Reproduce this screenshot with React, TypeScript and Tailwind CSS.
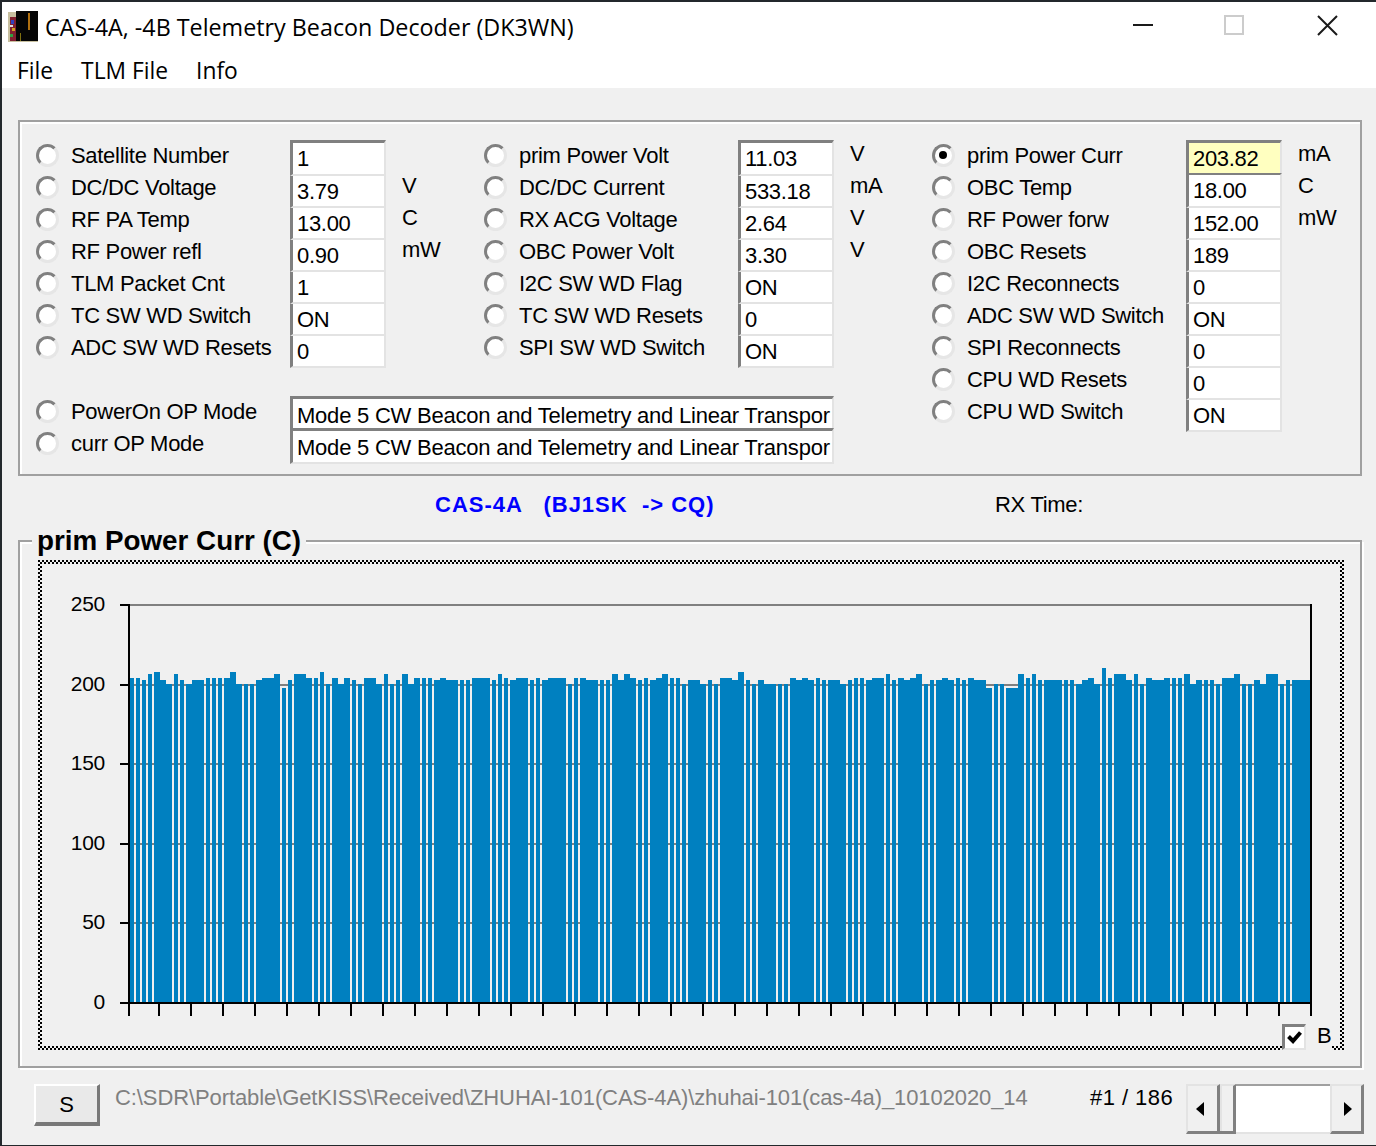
import React from 'react'

// bar runs taken off the plot: [from x, to x, top y]
const bars: [number, number, number][] = [
  [130,134,678],[136,140,678],[142,146,680],[148,152,674],[154,160,672],[160,166,680],[166,172,684],[174,178,674],[180,184,680],[186,192,684],
  [192,204,680],[206,210,678],[212,216,678],[218,222,678],[224,230,678],[230,236,672],[236,242,684],[244,248,684],[250,254,684],[256,262,680],
  [262,274,678],[274,280,674],[282,286,688],[288,292,680],[294,306,674],[306,312,678],[314,318,678],[320,324,672],[326,330,684],[332,338,678],
  [338,344,684],[344,350,678],[352,356,680],[358,362,684],[364,376,678],[376,382,684],[384,388,674],[390,394,684],[396,400,680],[402,408,674],
  [408,414,684],[414,420,678],[422,426,678],[428,432,678],[434,440,680],[440,446,678],[446,458,680],[460,464,680],[466,470,680],[472,490,678],
  [492,496,680],[498,502,674],[504,508,678],[510,516,680],[516,528,678],[530,534,680],[536,540,678],[542,548,680],[548,566,678],[568,572,684],
  [574,578,678],[580,586,678],[586,598,680],[600,604,680],[606,610,680],[612,618,674],[618,624,680],[624,630,674],[630,636,678],[638,642,680],
  [644,648,678],[650,656,680],[656,662,678],[662,668,674],[670,674,678],[676,680,678],[682,686,684],[688,700,680],[700,706,684],[708,712,680],
  [714,718,684],[720,732,678],[732,738,680],[738,744,672],[746,750,680],[752,756,684],[758,764,680],[764,776,684],[778,782,684],[784,788,684],
  [790,796,678],[796,802,680],[802,808,678],[808,814,680],[816,820,678],[822,826,680],[828,840,680],[840,846,684],[848,852,680],[854,858,678],
  [860,864,678],[866,872,680],[872,884,678],[886,890,674],[892,896,680],[898,904,678],[904,910,680],[910,916,678],[916,922,674],[924,928,684],
  [930,934,680],[936,942,680],[942,948,678],[948,954,680],[956,960,678],[962,966,680],[968,974,678],[974,986,680],[986,992,688],[994,998,684],
  [1000,1004,684],[1006,1018,688],[1018,1024,674],[1026,1030,678],[1032,1036,674],[1038,1042,680],[1044,1062,680],[1064,1068,680],[1070,1074,680],[1076,1082,684],
  [1082,1088,680],[1088,1094,678],[1094,1100,684],[1102,1106,668],[1108,1112,678],[1114,1126,674],[1126,1132,680],[1134,1138,674],[1140,1144,684],[1146,1152,678],
  [1152,1164,680],[1164,1170,678],[1172,1176,678],[1178,1182,678],[1184,1190,674],[1190,1196,684],[1196,1202,680],[1204,1208,680],[1210,1214,680],[1216,1220,684],
  [1222,1234,678],[1234,1240,674],[1242,1246,684],[1248,1252,684],[1254,1260,680],[1260,1266,684],[1266,1278,674],[1280,1284,684],[1286,1290,680],[1292,1310,680],
]

const xTicks = [129, 1311]
for (let x = 159; x <= 1305; x += 32) xTicks.push(x)

const yAxis = [
  { label: '250', y: 605 },
  { label: '200', y: 685 },
  { label: '150', y: 764 },
  { label: '100', y: 844 },
  { label: '50', y: 923 },
  { label: '0', y: 1003 },
]

type FieldData = { label: string; value: string; unit?: string; active?: boolean; highlight?: boolean; topLine?: boolean }

const col1: FieldData[] = [
  { label: 'Satellite Number', value: '1' },
  { label: 'DC/DC Voltage', value: '3.79', unit: 'V' },
  { label: 'RF PA Temp', value: '13.00', unit: 'C' },
  { label: 'RF Power refl', value: '0.90', unit: 'mW' },
  { label: 'TLM Packet Cnt', value: '1' },
  { label: 'TC SW WD Switch', value: 'ON' },
  { label: 'ADC SW WD Resets', value: '0' },
]

const col2: FieldData[] = [
  { label: 'prim Power Volt', value: '11.03', unit: 'V' },
  { label: 'DC/DC Current', value: '533.18', unit: 'mA' },
  { label: 'RX ACG Voltage', value: '2.64', unit: 'V' },
  { label: 'OBC Power Volt', value: '3.30', unit: 'V' },
  { label: 'I2C SW WD Flag', value: 'ON' },
  { label: 'TC SW WD Resets', value: '0' },
  { label: 'SPI SW WD Switch', value: 'ON' },
]

const col3: FieldData[] = [
  { label: 'prim Power Curr', value: '203.82', unit: 'mA', active: true, highlight: true },
  { label: 'OBC Temp', value: '18.00', unit: 'C', topLine: true },
  { label: 'RF Power forw', value: '152.00', unit: 'mW' },
  { label: 'OBC Resets', value: '189' },
  { label: 'I2C Reconnects', value: '0' },
  { label: 'ADC SW WD Switch', value: 'ON' },
  { label: 'SPI Reconnects', value: '0' },
  { label: 'CPU WD Resets', value: '0' },
  { label: 'CPU WD Switch', value: 'ON' },
]

const modeText = 'Mode 5 CW Beacon and Telemetry and Linear Transpor'

const Radio = ({ active }: { active?: boolean }) => (
  <div className="mt-[4px] flex h-[23px] w-[23px] shrink-0 items-center justify-center rounded-full border-[3px] border-t-[#808080] border-l-[#808080] border-r-[#e6e6e6] border-b-[#e6e6e6] bg-white">
    {active && <div className="h-[8px] w-[8px] -translate-x-px -translate-y-px rounded-full bg-black" />}
  </div>
)

const Field = ({ data, first }: { data: FieldData; first?: boolean }) => {
  const top = first ? 'h-[36px] border-t-[3px] border-t-[#808080]' : data.topLine ? 'mt-[1px] h-[35px] border-t-[2px] border-t-[#808080]' : 'mt-[4px] h-[32px]'
  return (
    <div className="flex h-[32px] w-[448px] items-start">
      <Radio active={data.active} />
      <div className="ml-[12px] w-[219px] shrink-0 leading-[32px]">{data.label}</div>
      <div className={`w-[96px] shrink-0 overflow-hidden border-r-2 border-b-2 border-l-[3px] border-r-[#e3e3e3] border-b-[#e3e3e3] border-l-[#808080] pl-[4px] leading-[31px] ${data.highlight ? 'bg-[#ffffc0]' : 'bg-white'} ${top}`}>
        {data.value}
      </div>
      {data.unit && <div className="ml-[16px] leading-[28px]">{data.unit}</div>}
    </div>
  )
}

const ModeRow = ({ label, last }: { label: string; last?: boolean }) => (
  <div className="flex h-[32px] items-start">
    <Radio />
    <div className="ml-[12px] w-[219px] shrink-0 leading-[32px]">{label}</div>
    <div className={`w-[544px] shrink-0 whitespace-nowrap border-t-[3px] border-l-[3px] border-r-2 border-t-[#808080] border-l-[#808080] border-r-[#e3e3e3] bg-white pl-[4px] leading-[33px] tracking-[-0.22px] ${last ? 'h-[36px] border-b-2 border-b-[#e3e3e3]' : 'h-[32px]'}`}>
      {modeText}
    </div>
  </div>
)

const Chart = () => (
  <svg className="block" width={1306} height={490} viewBox="38 560 1306 490">
    <defs>
      <pattern id="checker" x={38} y={560} width={4} height={4} patternUnits="userSpaceOnUse">
        <rect x={0} y={0} width={2} height={2} fill="#000" />
        <rect x={2} y={2} width={2} height={2} fill="#000" />
      </pattern>
    </defs>
    {/* focus frame, open at the bottom right where the check box sits */}
    <rect x={38} y={560} width={1306} height={4} fill="url(#checker)" />
    <rect x={38} y={560} width={4} height={490} fill="url(#checker)" />
    <rect x={1340} y={560} width={4} height={490} fill="url(#checker)" />
    <rect x={38} y={1046} width={1244} height={4} fill="url(#checker)" />
    <rect x={1332} y={1046} width={12} height={4} fill="url(#checker)" />

    <rect x={130} y={604} width={1180} height={2} fill="#808080" />
    {yAxis.slice(1, 5).map((t) => (
      <rect key={t.y} x={130} y={t.y - 1} width={1180} height={2} fill="#808080" />
    ))}
    {bars.map(([a, b, top]) => (
      <rect key={a} x={a} y={top} width={b - a} height={1002 - top} fill="#0080c0" />
    ))}
    <rect x={128} y={604} width={2} height={400} fill="#000" />
    <rect x={1310} y={604} width={2} height={400} fill="#000" />
    <rect x={120} y={1002} width={1192} height={2} fill="#000" />
    {yAxis.map((t) => (
      <rect key={t.label} x={120} y={t.y - 1} width={10} height={2} fill="#000" />
    ))}
    {xTicks.map((x) => (
      <rect key={x} x={x - 1} y={1004} width={2} height={12} fill="#000" />
    ))}
    {yAxis.map((t) => (
      <text key={t.label} x={105} y={t.y + 6} textAnchor="end" fontSize={21} fontFamily="'Liberation Sans', sans-serif" fill="#000">
        {t.label}
      </text>
    ))}
  </svg>
)

const ScrollButton = ({ dir }: { dir: 'left' | 'right' }) => (
  <div className={`flex h-[50px] w-[34px] shrink-0 items-center justify-center border-t-2 border-l-2 border-r-[3px] border-b-[3px] border-t-[#e3e3e3] border-l-[#e3e3e3] border-r-[#808080] border-b-[#808080] bg-[#f0f0f0] ${dir === 'left' ? 'pr-[6px]' : 'pl-[2px]'}`}>
    <svg width={8} height={14} viewBox="0 0 8 14">
      <polygon points={dir === 'left' ? '8,0 8,14 0,7' : '0,0 0,14 8,7'} fill="#000" />
    </svg>
  </div>
)

const App = () => {
  return (
    <div className="h-[1146px] w-[1376px] overflow-hidden bg-[#23282c] pt-[2px] pb-[1px] pl-[2px] font-['Liberation_Sans',sans-serif] text-[22px] tracking-[-0.3px] text-black">
      <div className="h-full bg-[#f0f0f0]">
        {/* title bar and menu */}
        <div className="h-[86px] bg-white font-['Open_Sans',sans-serif] tracking-normal">
          <div className="flex h-[46px] items-center">
            <svg className="mt-[4px] ml-[6px] shrink-0" width={31} height={32} viewBox="0 0 31 32">
              <rect x={0} y={1} width={30} height={30} fill="#c8c0a0" />
              <rect x={2} y={6} width={6} height={24} fill="#802030" />
              <rect x={3} y={9} width={3} height={4} fill="#3040c0" />
              <rect x={2} y={14} width={3} height={2} fill="#e0e0e0" />
              <rect x={4} y={17} width={3} height={3} fill="#d0a020" />
              <rect x={2} y={23} width={3} height={3} fill="#30a040" />
              <rect x={8} y={0} width={22} height={30} fill="#050505" />
              <rect x={20} y={2} width={2} height={17} fill="#b07010" />
              <rect x={12} y={22} width={1} height={8} fill="#807010" />
            </svg>
            <div className="mt-[5px] ml-[6px] text-[23.3px] leading-none">CAS-4A, -4B Telemetry Beacon Decoder (DK3WN)</div>
            <div className="ml-auto flex items-center">
              <div className="mr-[71px] h-[2px] w-[20px] bg-[#1a1a1a]" />
              <div className="mr-[73px] h-[20px] w-[20px] border-2 border-[#cccccc]" />
              <svg className="mr-[38px]" width={21} height={21} viewBox="0 0 21 21">
                <path d="M1 1 L20 20 M20 1 L1 20" stroke="#1a1a1a" strokeWidth={2} fill="none" />
              </svg>
            </div>
          </div>
          <div className="flex h-[40px] items-center pt-[6px] pl-[15px] text-[22.8px]">
            <span>File</span>
            <span className="ml-[28px]">TLM File</span>
            <span className="ml-[28px]">Info</span>
          </div>
        </div>

        <div className="ml-[16px] w-[1346px]">
          {/* telemetry values */}
          <div className="mt-[32px] flex h-[356px] w-[1344px] border-2 border-[#a0a0a0] pt-[18px] pl-[16px] shadow-[inset_2px_2px_0_#ffffff]">
            <div className="w-[896px]">
              <div className="flex">
                <div>{col1.map((f, i) => <Field key={f.label} data={f} first={i === 0} />)}</div>
                <div>{col2.map((f, i) => <Field key={f.label} data={f} first={i === 0} />)}</div>
              </div>
              <div className="pt-[32px]">
                <ModeRow label="PowerOn OP Mode" />
                <ModeRow label="curr OP Mode" last />
              </div>
            </div>
            <div>{col3.map((f, i) => <Field key={f.label} data={f} first={i === 0} />)}</div>
          </div>

          {/* source line */}
          <div className="flex h-[64px] items-start pt-[15px] leading-[28px]">
            <div className="ml-[417px] w-[560px] whitespace-pre font-bold tracking-[1px] text-[#0000ff]">CAS-4A   (BJ1SK  -&gt; CQ)</div>
            <div>RX Time:</div>
          </div>

          {/* plot */}
          <div className="relative h-[528px] w-[1344px] border-2 border-[#a0a0a0] pt-[18px] pl-[18px] shadow-[2px_2px_0_#ffffff,inset_2px_2px_0_#ffffff]">
            <div className="absolute top-[-17px] left-[12px] bg-[#f0f0f0] px-[5px] text-[27.8px] font-bold leading-[32px] tracking-normal">prim Power Curr (C)</div>
            <div className="relative h-[490px] w-[1306px]">
              <Chart />
              <div className="absolute top-[464px] left-[1244px] flex h-[26px] w-[24px] items-center justify-center border-t-[3px] border-l-[3px] border-r-2 border-b-2 border-t-[#808080] border-l-[#808080] border-r-[#e3e3e3] border-b-[#e3e3e3] bg-white">
                <svg width={15} height={13} viewBox="0 0 15 13">
                  <path d="M1.5 5.5 L6 10 L13.5 1.5" stroke="#000" strokeWidth={4} fill="none" />
                </svg>
              </div>
              <div className="absolute top-[462px] left-[1279px] leading-[28px]">B</div>
            </div>
          </div>
        </div>

        {/* bottom bar */}
        <div className="flex items-start pt-[16px] pl-[32px]">
          <div className="flex h-[42px] w-[66px] shrink-0 items-center justify-center border-t-2 border-l-2 border-r-[3px] border-b-[4px] border-t-white border-l-white border-r-[#787878] border-b-[#787878] bg-[#e9e9e9]">S</div>
          <div className="ml-[15px] w-[975px] shrink-0 whitespace-nowrap leading-[28px] tracking-[-0.1px] text-[#808080]">C:\SDR\Portable\GetKISS\Received\ZHUHAI-101(CAS-4A)\zhuhai-101(cas-4a)_10102020_14</div>
          <div className="w-[96px] shrink-0 whitespace-nowrap leading-[28px] tracking-[0.45px]">#1 / 186</div>
          <div className="flex h-[50px] w-[178px] shrink-0">
            <ScrollButton dir="left" />
            <div className="h-[50px] w-[16px] shrink-0 border-t-2 border-r-[3px] border-b-[3px] border-t-[#e3e3e3] border-r-[#808080] border-b-[#808080] bg-[#f0f0f0] shadow-[inset_2px_0_0_#e3e3e3]" />
            <div className="h-[50px] flex-1 border-t-2 border-b-2 border-t-[#a0a0a0] border-b-[#e3e3e3] bg-white" />
            <ScrollButton dir="right" />
          </div>
        </div>
      </div>
    </div>
  )
}

export default App
